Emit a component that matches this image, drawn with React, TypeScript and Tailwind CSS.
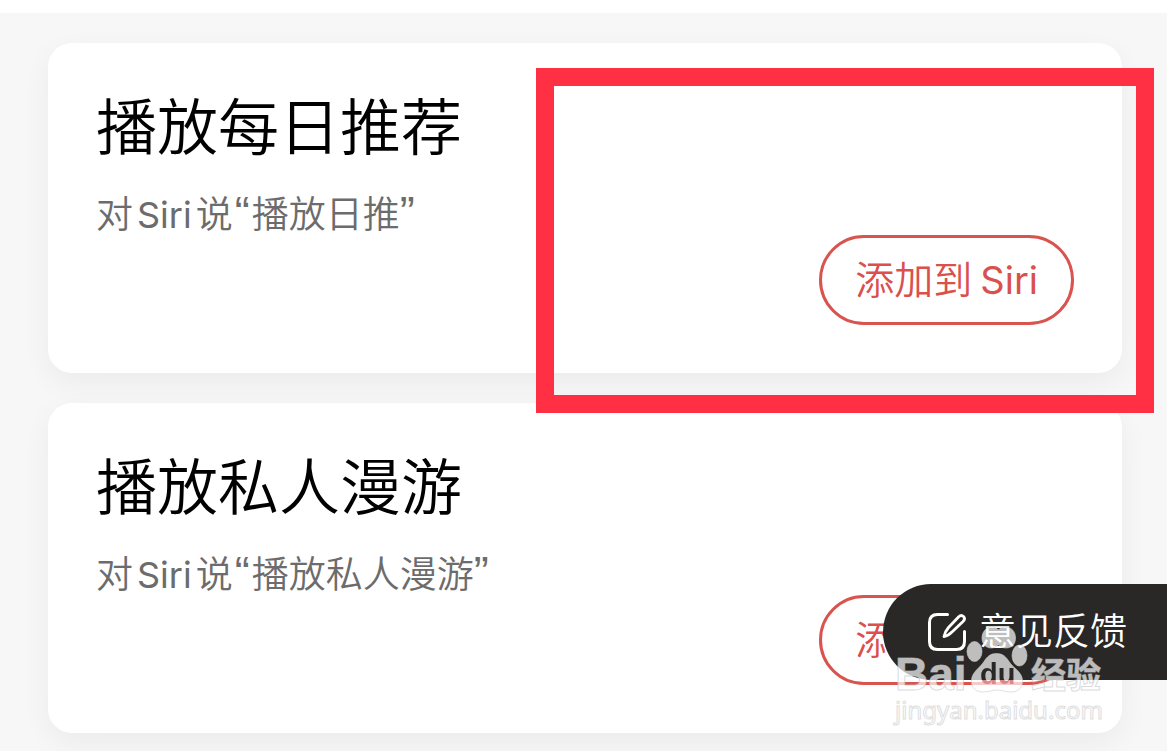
import React from 'react';

interface Shortcut {
  id: string;
  title: string;
  phrase: string;
  highlighted?: boolean;
}

const shortcuts: Shortcut[] = [
  { id: 'daily', title: '播放每日推荐', phrase: '播放日推', highlighted: true },
  { id: 'roaming', title: '播放私人漫游', phrase: '播放私人漫游' },
];

const ShortcutCard: React.FC<{ shortcut: Shortcut }> = ({ shortcut }) => (
  <section className="relative flex min-h-[330px] flex-col rounded-3xl bg-white p-12 shadow-[0_10px_30px_rgba(0,0,0,0.05)]">
    <h2 className="pt-px text-[61px] leading-[72px] font-[350] text-black">{shortcut.title}</h2>
    <p className="mt-6 text-[37px] leading-[54px] font-[350] text-[#6c6c6c]">
      对<span className="mx-1 text-[36px] font-normal">Siri</span>说
      <span className="mx-0.5 font-['Liberation_Sans'] text-[45px] leading-none">“</span>
      {shortcut.phrase}
      <span className="font-['Liberation_Sans'] text-[45px] leading-none">”</span>
    </p>
    <button
      type="button"
      className="absolute right-12 bottom-12 h-[90px] rounded-full border-[3px] border-[#d9534f] px-[33px] text-[39px] leading-[52px] font-[350] text-[#d9504d]"
    >
      添加到<span className="ml-2 text-[38px] font-normal">Siri</span>
    </button>
    {shortcut.highlighted && (
      <div className="pointer-events-none absolute top-[25px] -right-8 -bottom-10 z-10 w-[618px] border-[18px] border-[#ff3044]" />
    )}
  </section>
);

const FeedbackIcon = () => (
  <svg width="40" height="40" viewBox="0 0 40 40" fill="none" stroke="currentColor" strokeLinecap="round" strokeLinejoin="round">
    <path d="M20.500 2.500H10.500Q2.500 2.500 2.500 10.500V29.500Q2.500 37.500 10.500 37.500H29.500Q37.500 37.500 37.500 29.500V19.500" strokeWidth="3" />
    <path d="M17 24.500C17.500 21.500 19 18.500 21.500 15.500L31.500 5C33 3.500 35 3 36.500 4.500C38 6 37.500 8 36 9.500L25.500 19.500C23 22 20 24 17 24.500Z" strokeWidth="2.800" />
  </svg>
);

const Paw = () => (
  <svg width="70" height="75" viewBox="0 0 70 75" className="absolute top-0 left-[67px]" fill="rgba(255,255,255,0.7)" stroke="rgba(205,205,205,0.6)">
    <path d="M30 5C24 5 20 10 20 16C20 22 24 26 29 26C32 26 34 25 36.500 23C39 25 41 26 44 26C50 26 53.500 22 53.500 16C53.500 10 50 5 43 5C40 5 38 6 36.500 8C35 6 33 5 30 5Z" />
    <ellipse cx="12.500" cy="29.500" rx="7.500" ry="10" />
    <ellipse cx="57.500" cy="33.500" rx="7.500" ry="10.500" />
    <path d="M34.500 31.500C41 31.500 44 35 47 39.500C51 46 60.500 50 60.500 59C60.500 66 56 70 49 70C43 70 40 68 35 68C30 68 27 70 21 70C14 70 9.500 66 9.500 59C9.500 50 18 46 22 39.500C25 35 28 31.500 34.500 31.500Z" />
  </svg>
);

const Watermark = () => (
  <div className="pointer-events-none absolute top-[609px] right-[62px] z-30 w-[210px] font-['Liberation_Sans','Noto_Sans_CJK_SC',sans-serif]">
    <div className="relative flex h-[75px] items-end justify-between text-[rgba(255,255,255,0.7)] [-webkit-text-stroke:1px_rgba(195,195,195,0.6)]">
      <span className="text-[46px] leading-[46px] font-bold">Bai</span>
      <Paw />
      <span className="absolute top-[37px] left-[85px] bg-[linear-gradient(#2a2727_21px,#d98a88_21px,#d98a88_25px,#ffffff_25px)] bg-clip-text text-[29px] leading-[30px] font-bold text-transparent [-webkit-text-stroke:0px]">
        du
      </span>
      <span className="mr-1 text-[35px] leading-[42px] font-bold">经验</span>
    </div>
    <div className="font-['Noto_Sans',sans-serif] text-[24px] leading-[26px] text-white [-webkit-text-stroke:1px_#dedede]">
      jingyan.baidu.com
    </div>
  </div>
);

export default function App() {
  return (
    <div className="relative min-h-screen overflow-hidden border-t-[13px] border-white bg-[#f7f7f7] font-['Inter','Noto_Sans_CJK_SC',sans-serif]" lang="zh-CN">
      <main className="flex flex-col gap-[30px] pt-[30px] pr-[45px] pb-[18px] pl-12">
        {shortcuts.map((shortcut) => (
          <ShortcutCard key={shortcut.id} shortcut={shortcut} />
        ))}
      </main>

      {/* Floating feedback tab */}
      <button
        type="button"
        className="absolute top-[571px] right-0 z-20 flex h-24 items-center gap-3 rounded-l-full bg-[#2a2727] pr-10 pl-11 text-[37px] leading-[52px] font-[350] text-white"
      >
        <FeedbackIcon />
        意见反馈
      </button>

      <Watermark />
    </div>
  );
}
